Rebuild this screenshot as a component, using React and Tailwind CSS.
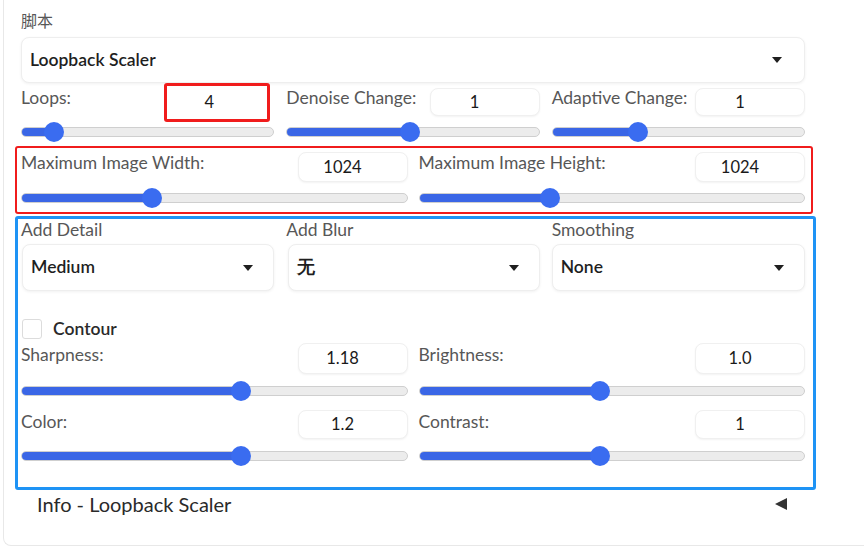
import React from "react";

const Caret = () => (
	<svg width="10" height="6" viewBox="0 0 10 6" className="shrink-0">
		<path d="M0 0 L10 0 L5 6 Z" fill="#1f1f1f" />
	</svg>
);

const Slider = ({ pct }) => (
	<div className="relative h-[20px] flex items-center">
		<div className="relative w-full h-[10px] rounded-full bg-[#ececec] border border-[#cfcfcf] overflow-hidden">
			<div className="h-full bg-[#3a66e6]" style={{ width: `${pct}%` }} />
		</div>
		<div
			className="absolute top-[0px] w-[20px] h-[20px] rounded-full bg-[#3a6cf0]"
			style={{ left: `calc(${pct}% - 10px)` }}
		/>
	</div>
);

const NumBox = ({ value, className = "" }) => (
	<div
		className={`flex items-center justify-center pr-5 bg-white border border-[#f0f0f0] rounded-lg shadow-[0_1px_2px_rgba(0,0,0,0.05)] text-[16.5px] text-[#1a1a1a] ${className}`}
	>
		{value}
	</div>
);

const Select = ({ value, className = "" }) => (
	<div
		className={`flex items-center justify-between pl-[8px] pr-[20px] bg-white border border-[#eeeeee] rounded-lg shadow-[0_1px_3px_rgba(0,0,0,0.06)] ${className}`}
	>
		<span className="text-[17.5px] font-semibold text-[#1f1f1f]">{value}</span>
		<Caret />
	</div>
);

const Label = ({ children, className = "" }) => (
	<span className={`block h-[22px] text-[17.5px] leading-[22px] text-[#575757] whitespace-nowrap ${className}`}>
		{children}
	</span>
);

const Field = ({ label, value, pct, headH = "h-[30px]", labelMt = "mt-0", sliderMt = "mt-[6px]" }) => (
	<div className="flex flex-col">
		<div className={`flex items-start justify-between ${headH}`}>
			<Label className={labelMt}>{label}</Label>
			<NumBox value={value} className="w-[110px] h-full" />
		</div>
		<div className={sliderMt}>
			<Slider pct={pct} />
		</div>
	</div>
);

const App = () => {
	return (
		<div className="w-[864px] h-[553px] bg-white overflow-hidden font-['Lato',sans-serif]">
			<div className="ml-[3px] h-[546px] border-l border-b border-[#e8e8e8] rounded-bl-lg pl-[17px] pt-[10px]">
				<div className="w-[784px] flex flex-col">
					<span className="block h-[20px] leading-[20px] text-[16px] text-[#575757] font-['Noto_Sans_CJK_SC',sans-serif]">
						脚本
					</span>
					<Select value="Loopback Scaler" className="mt-[7px] h-[46px] pr-[22px]" />

					{/* loops row */}
					<div className="grid grid-cols-3 gap-x-[12px] mb-[4px]">
						<div className="flex flex-col">
							<div className="flex items-start justify-between h-[39px]">
								<Label className="mt-[4px]">Loops:</Label>
								<div className="mr-[4px] w-[106px] h-[39px] border-[3px] border-[#f01c1c] rounded-[3px] bg-white flex items-center justify-center pr-4 text-[16.5px] text-[#1a1a1a]">
									4
								</div>
							</div>
							<Slider pct={13} />
						</div>
						<div className="flex flex-col">
							<div className="flex items-start justify-between h-[39px]">
								<Label className="mt-[4px]">Denoise Change:</Label>
								<NumBox value="1" className="mt-[5px] w-[110px] h-[28px]" />
							</div>
							<Slider pct={49} />
						</div>
						<div className="flex flex-col">
							<div className="flex items-start justify-between h-[39px]">
								<Label className="mt-[4px]">Adaptive Change:</Label>
								<NumBox value="1" className="mt-[5px] w-[110px] h-[28px]" />
							</div>
							<Slider pct={34} />
						</div>
					</div>

					{/* max size, highlighted red */}
					<div className="-ml-[6px] w-[798px] border-[2px] border-[#f01c1c] rounded-[3px] pl-[4px] pr-[6px] pt-[4px] pb-[4px]">
						<div className="grid grid-cols-2 gap-x-[11px]">
							<Field label="Maximum Image Width:" value="1024" pct={34} />
							<Field label="Maximum Image Height:" value="1024" pct={34} />
						</div>
					</div>

					{/* options, highlighted blue */}
					<div className="-ml-[6px] mt-[2px] w-[801px] border-[3px] border-[#1e93f5] rounded-[3px] pl-[3px] pr-[8px] pb-[21px]">
						<div className="grid grid-cols-3 gap-x-[12px]">
							<div className="flex flex-col">
								<Label>Add Detail</Label>
								<Select value="Medium" className="mt-[3px] h-[47px] ml-[1px]" />
							</div>
							<div className="flex flex-col">
								<Label>Add Blur</Label>
								<Select value="无" className="mt-[3px] h-[47px] ml-[2px]" />
							</div>
							<div className="flex flex-col">
								<Label>Smoothing</Label>
								<Select value="None" className="mt-[3px] h-[47px]" />
							</div>
						</div>

						<div className="mt-[28px] flex items-center h-[20px]">
							<div className="ml-[1px] w-[20px] h-[20px] bg-white border border-[#dcdcdc] rounded-[3px]" />
							<span className="ml-[11px] text-[17.5px] font-semibold text-[#2a2a2a]">Contour</span>
						</div>

						<div className="mt-[4px] grid grid-cols-2 gap-x-[11px]">
							<Field label="Sharpness:" value="1.18" pct={57} headH="h-[31px]" labelMt="mt-[1px]" sliderMt="mt-[7px]" />
							<Field label="Brightness:" value="1.0" pct={47} headH="h-[31px]" labelMt="mt-[1px]" sliderMt="mt-[7px]" />
						</div>
						<div className="mt-[9px] grid grid-cols-2 gap-x-[11px]">
							<Field label="Color:" value="1.2" pct={57} headH="h-[29px]" labelMt="mt-[1px]" sliderMt="mt-[7px]" />
							<Field label="Contrast:" value="1" pct={47} headH="h-[29px]" labelMt="mt-[1px]" sliderMt="mt-[7px]" />
						</div>
					</div>

					<div className="h-[28px] flex items-center justify-between pl-[16px] pr-[18px]">
						<span className="text-[20px] text-[#2a2a2a]">Info - Loopback Scaler</span>
						<svg width="12" height="12" viewBox="0 0 12 12">
							<path d="M0 6 L12 0 L12 12 Z" fill="#333333" />
						</svg>
					</div>
				</div>
			</div>
		</div>
	);
};

export default App;
